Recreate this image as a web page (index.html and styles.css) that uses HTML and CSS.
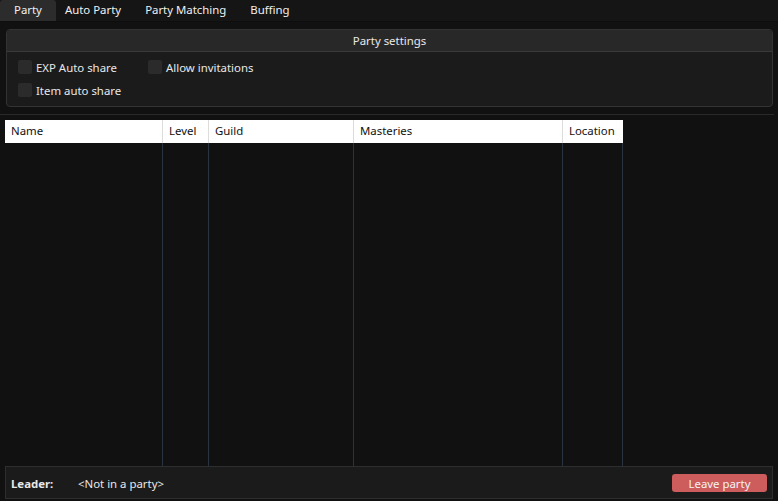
FILE: index.html
```html
<!DOCTYPE html>
<html>
<head>
<meta charset="utf-8">
<link rel="stylesheet" href="styles.css">
</head>
<body>
<div class="tabs">
  <div class="tab active">Party</div>
  <div class="tab">Auto Party</div>
  <div class="tab">Party Matching</div>
  <div class="tab">Buffing</div>
</div>
<div class="group">
  <div class="group-title">Party settings</div>
  <div class="group-body">
    <div class="col col1">
      <label class="check"><span class="box"></span>EXP Auto share</label>
      <label class="check"><span class="box"></span>Item auto share</label>
    </div>
    <div class="col">
      <label class="check"><span class="box"></span>Allow invitations</label>
    </div>
  </div>
</div>
<div class="sep"></div>
<div class="table">
  <div class="thead">
    <div class="th c1">Name</div>
    <div class="th c2">Level</div>
    <div class="th c3">Guild</div>
    <div class="th c4">Masteries</div>
    <div class="th c5">Location</div>
  </div>
  <div class="tbody">
    <div class="td c1"></div>
    <div class="td c2"></div>
    <div class="td c3"></div>
    <div class="td c4"></div>
    <div class="td c5"></div>
  </div>
</div>
<div class="footer">
  <span class="leader">Leader:</span>
  <span class="leader-name">&lt;Not in a party&gt;</span>
  <button class="leave">Leave party</button>
</div>
</body>
</html>
```
FILE: styles.css
```css
html, body {
  margin: 0;
  padding: 0;
  background: #111111;
  color: #e8e8e8;
  font-family: "Noto Sans", "Open Sans", sans-serif;
  font-size: 11.4px;
  height: 501px;
  overflow: hidden;
}
.tabs {
  display: flex;
  height: 21px;
  background: #151515;
  border-bottom: 1px solid #0e0e0e;
}
.tab {
  height: 21px;
  line-height: 20px;
  color: #f0f0f0;
}
.tab.active {
  background: #2c2c2c;
  border-radius: 3px 3px 0 0;
  padding: 0 14px 0 14px;
}
.tab:nth-child(2) { padding-left: 9px; padding-right: 12px; }
.tab:nth-child(3) { padding-left: 12px; padding-right: 12px; }
.tab:nth-child(4) { padding-left: 12px; }
.group {
  margin: 7px 5px 0 6px;
  height: 76px;
  border: 1px solid #333333;
  border-radius: 4px;
  background: #1b1b1b;
  overflow: hidden;
}
.group-title {
  height: 21px;
  line-height: 21px;
  text-align: center;
  background: #282828;
  border-bottom: 1px solid #3a3a3a;
}
.group-body {
  display: flex;
  padding: 7px 0 0 11px;
}
.col {
  display: flex;
  flex-direction: column;
  gap: 7px;
}
.col1 {
  width: 130px;
}
.check {
  display: flex;
  align-items: center;
  height: 16px;
  gap: 4px;
}
.box {
  width: 14px;
  height: 14px;
  background: #2b2b2b;
  border-radius: 2px;
}
.sep {
  margin: 7px 4px 0 0;
  height: 1px;
  background: #2a2a2a;
}
.table {
  margin: 5px 0 0 5px;
  display: flex;
  flex-direction: column;
  height: 346px;
}
.thead, .tbody {
  display: flex;
}
.thead {
  height: 23px;
  background: #ffffff;
  width: 618px;
}
.th {
  color: #111111;
  line-height: 22px;
  padding-left: 6px;
  box-sizing: border-box;
  border-right: 1px solid #dcdcdc;
}
.tbody {
  flex: 1;
}
.td {
  box-sizing: border-box;
  border-right: 1px solid #2a3440;
}
.c1 { width: 158px; }
.c2 { width: 46px; }
.c3 { width: 145px; }
.c4 { width: 209px; }
.c5 { width: 60px; }
.th.c5 { border-right: none; }
.footer {
  margin: 0 5px 0 5px;
  height: 30px;
  border: 1px solid #2e2e2e;
  background: #1b1b1b;
  display: flex;
  align-items: center;
  padding: 1px 5px 0 5px;
}
.leader {
  font-weight: bold;
  width: 67px;
}
.leader-name {
  flex: 1;
}
.leave {
  width: 95px;
  height: 18px;
  border: none;
  border-radius: 3px;
  background: #cd5c5c;
  color: #f4f4f4;
  font-family: inherit;
  font-size: 11.4px;
  padding: 0;
  line-height: 17px;
}
```
